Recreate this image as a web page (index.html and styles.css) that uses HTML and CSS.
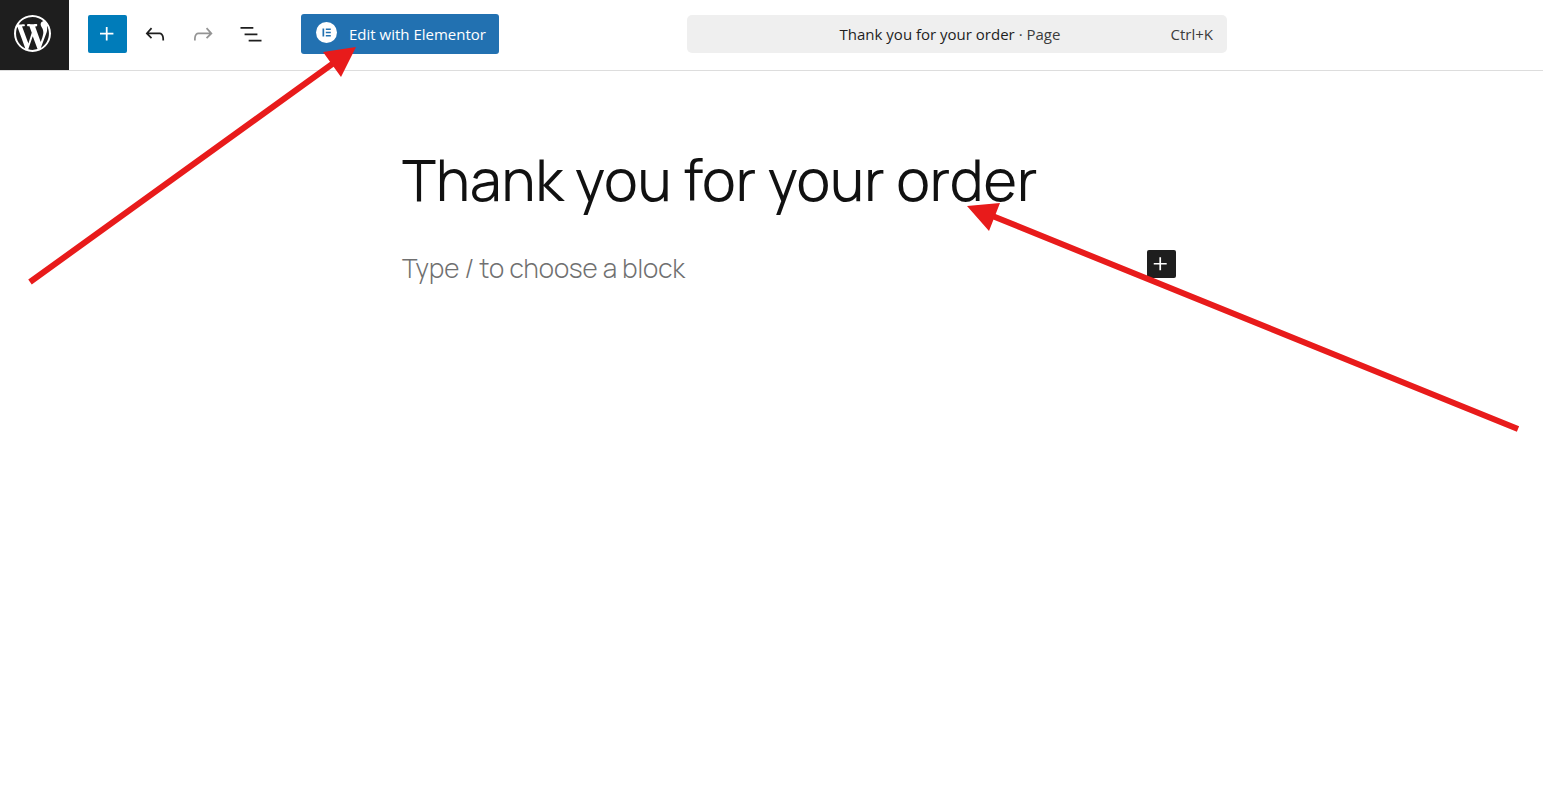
FILE: index.html
```html
<!DOCTYPE html>
<html lang="en">
<head>
  <meta charset="UTF-8" />
  <meta name="viewport" content="width=device-width, initial-scale=1" />
  <title>Thank you for your order</title>
  <link rel="stylesheet" href="styles.css">
</head>
<body>

  <header class="editor-header">
    <a class="wp-logo" href="#" aria-label="View Pages">
      <svg viewBox="0 0 20 20"><path d="M20 10c0-5.51-4.49-10-10-10C4.48 0 0 4.49 0 10c0 5.52 4.48 10 10 10 5.51 0 10-4.48 10-10zM7.78 15.37L4.37 6.22c.55-.02 1.17-.08 1.17-.08.5-.06.44-1.13-.06-1.11 0 0-1.45.11-2.37.11-.18 0-.37 0-.58-.01C4.12 2.69 6.87 1.11 10 1.11c2.33 0 4.45.87 6.05 2.34-.68-.11-1.65.39-1.65 1.58 0 .74.45 1.36.9 2.1.35.61.55 1.36.55 2.46 0 1.49-1.4 5-1.4 5l-3.03-8.37c.54-.02.82-.17.82-.17.5-.05.44-1.25-.06-1.22 0 0-1.44.12-2.38.12-.87 0-2.33-.12-2.33-.12-.5-.03-.56 1.2-.06 1.22l.92.08 1.26 3.41zM17.41 10c.24-.64.74-1.87.43-4.25.7 1.29 1.05 2.71 1.05 4.25 0 3.29-1.73 6.24-4.4 7.78.97-2.59 1.94-5.2 2.92-7.78zM6.1 18.09C3.12 16.65 1.11 13.53 1.11 10c0-1.3.23-2.48.72-3.59C3.25 10.3 4.67 14.2 6.1 18.09zm4.03-6.63l2.58 6.98c-.86.29-1.76.45-2.71.45-.79 0-1.57-.11-2.29-.33.81-2.38 1.62-4.74 2.42-7.1z"/></svg>
    </a>

    <div class="toolbar">
      <button class="tool-button primary" aria-label="Block Inserter">
        <svg viewBox="0 0 24 24"><path d="M11 12.5V17.5H12.5V12.5H17.5V11H12.5V6H11V11H6V12.5H11Z"/></svg>
      </button>
      <button class="tool-button" aria-label="Undo">
        <svg viewBox="0 0 24 24"><path d="M18.3 11.7c-.6-.6-1.4-.9-2.3-.9H6.7l2.9-3.3-1.1-1-4.5 5L8.5 16l1-1-2.7-2.7H16c.5 0 .9.2 1.3.5 1 1 1 3.4 1 4.5v.3h1.5v-.2c0-1.5 0-4.3-1.5-5.7z"/></svg>
      </button>
      <button class="tool-button" aria-label="Redo" disabled>
        <svg viewBox="0 0 24 24"><path d="M15.6 6.5l-1.1 1 2.9 3.3H8c-.9 0-1.7.3-2.3.9-1.4 1.5-1.4 4.2-1.4 5.6v.2h1.5v-.3c0-1.1 0-3.5 1-4.5.3-.3.7-.5 1.3-.5h9.2L14.5 15l1.1 1.1 4.6-4.6-4.6-5z"/></svg>
      </button>
      <button class="tool-button" aria-label="Document Overview">
        <svg viewBox="0 0 24 24"><path d="M3 6h11v1.5H3V6Zm3.5 5.5h11V13h-11v-1.5ZM21 17H10v1.5h11V17Z"/></svg>
      </button>
    </div>

    <button class="elementor-button">
      <svg viewBox="0 0 21 21">
        <circle cx="10.5" cy="10.5" r="10.5" fill="#fff"/>
        <path d="M6.5 6.5h1.7v8H6.5zM9.8 6.5h5v1.6h-5zM9.8 9.7h5v1.6h-5zM9.8 12.9h5v1.6h-5z" fill="#2271b1"/>
      </svg>
      <span>Edit with Elementor</span>
    </button>

    <div class="header-center">
      <button class="document-bar">
        <span class="document-title">Thank you for your order <span class="document-type">· Page</span></span>
        <span class="shortcut">Ctrl+K</span>
      </button>
    </div>
  </header>

  <main class="canvas">
    <div class="content">
      <h1>Thank you for your order</h1>
      <div class="block-row">
        <p>Type / to choose a block</p>
        <button class="inserter" aria-label="Add block">
          <svg viewBox="0 0 24 24"><path d="M11 12.5V17.5H12.5V12.5H17.5V11H12.5V6H11V11H6V12.5H11Z"/></svg>
        </button>
      </div>
    </div>
  </main>

  <!-- red pointer arrows over the editor -->
  <svg class="arrows" width="1543" height="450" aria-hidden="true">
    <path d="M30 282L335 62M1518 429L990 215" stroke="#e81b1b" stroke-width="6"/>
    <path d="M356 47L323 52L341 77ZM967 206L1000 203L989 231Z" fill="#e81b1b"/>
  </svg>

</body>
</html>
```
FILE: styles.css
```css
* {
  box-sizing: border-box;
}

body {
  margin: 0;
  background: #fff;
  color: #1e1e1e;
  font-family: "Segoe UI", "Open Sans", sans-serif;
  overflow-x: hidden;
}

button {
  border: none;
  padding: 0;
  font-family: inherit;
  cursor: pointer;
}

svg {
  fill: currentColor;
}

.editor-header {
  display: flex;
  align-items: center;
  height: 71px;
  border-bottom: 1px solid #ddd;
}

.wp-logo {
  display: flex;
  align-items: center;
  width: 69px;
  height: 70px;
  padding: 0 0 4px 14px;
  background: #1e1e1e;
  color: #fff;
}

.wp-logo svg {
  width: 37px;
  height: 37px;
}

.toolbar {
  display: flex;
  gap: 9px;
  padding: 0 30px 2px 19px;
}

.tool-button {
  display: flex;
  align-items: center;
  justify-content: center;
  width: 39px;
  height: 38px;
  padding-right: 2px;
  border-radius: 2px;
  background: transparent;
  color: #1e1e1e;
}

.tool-button svg,
.inserter svg {
  width: 28px;
  height: 28px;
}

.tool-button.primary {
  background: #007cba;
  color: #fff;
}

.tool-button:disabled {
  color: #949494;
}

.elementor-button {
  display: flex;
  align-items: center;
  gap: 12px;
  width: 198px;
  height: 40px;
  margin-bottom: 2px;
  padding-left: 15px;
  border-radius: 3px;
  background: #2271b1;
  color: #fff;
  font-size: 15px;
  white-space: nowrap;
}

.elementor-button svg {
  width: 21px;
  height: 21px;
  margin-bottom: 3px;
}

.header-center {
  flex: 1;
  display: flex;
  justify-content: center;
  padding: 0 128px 2px 0;
}

.document-bar {
  display: grid;
  grid-template-columns: 1fr auto 1fr;
  align-items: center;
  width: 540px;
  height: 38px;
  padding: 0 14px;
  border-radius: 5px;
  background: #efefef;
  color: #1e1e1e;
  font-size: 15px;
}

.document-title {
  grid-column: 2;
  padding-right: 14px;
}

.document-type,
.shortcut {
  color: #3c3c3c;
}

.shortcut {
  justify-self: end;
}

.canvas {
  padding: 70px 0 0 35px;
}

.content {
  max-width: 774px;
  margin: 0 auto;
  font-family: Manrope, Inter, sans-serif;
}

h1 {
  margin: 0;
  color: #111;
  font-size: 57px;
  line-height: 76px;
  font-weight: 400;
}

.block-row {
  display: flex;
  justify-content: space-between;
  align-items: flex-start;
  margin-top: 33px;
}

.block-row p {
  margin: 0;
  color: #707070;
  font-size: 26px;
  line-height: 36px;
  font-weight: 300;
}

.inserter {
  display: flex;
  align-items: center;
  justify-content: center;
  width: 29px;
  height: 28px;
  padding-right: 2px;
  border-radius: 2px;
  background: #1e1e1e;
  color: #fff;
}

.arrows {
  position: absolute;
  top: 0;
  left: 0;
  pointer-events: none;
}
```
